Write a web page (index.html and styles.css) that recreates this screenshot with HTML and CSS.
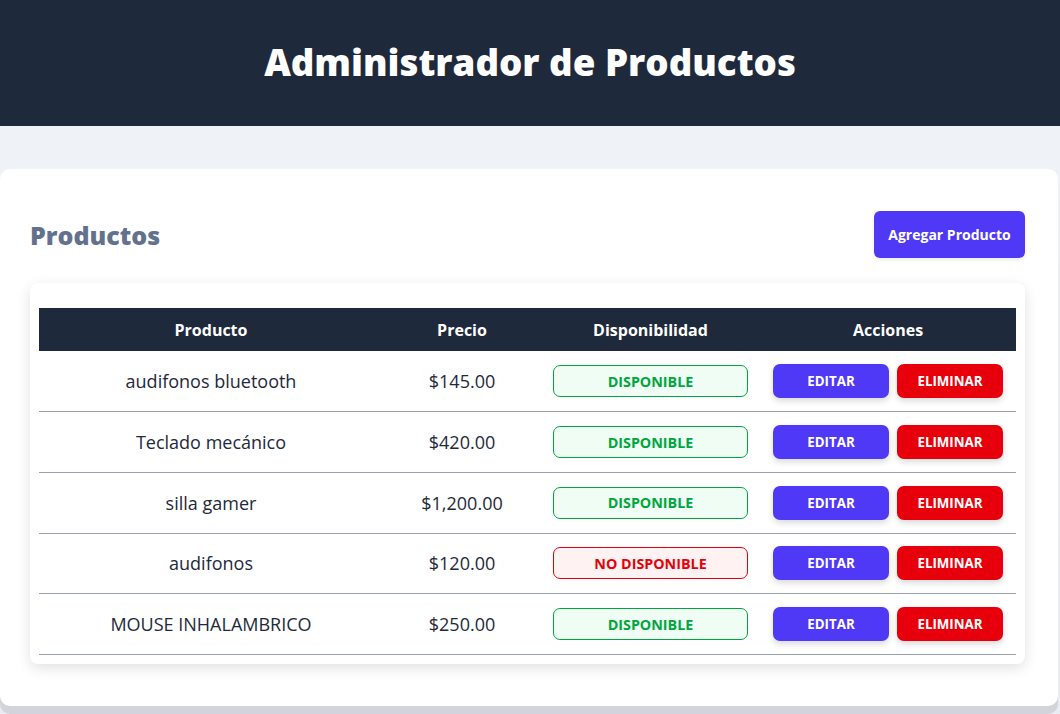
FILE: index.html
```html
<!DOCTYPE html>
<html lang="es">
<head>
<meta charset="utf-8">
<title>Administrador de Productos</title>
<link rel="stylesheet" href="styles.css">
</head>
<body>
<header class="top">
  <h1 class="top-title">Administrador de Productos</h1>
</header>
<main class="page">
  <section class="panel">
    <div class="panel-head">
      <h2 class="panel-title">Productos</h2>
      <button class="btn-add">Agregar Producto</button>
    </div>
    <div class="table-card">
      <table class="tbl">
        <thead>
          <tr>
            <th class="c1">Producto</th>
            <th class="c2">Precio</th>
            <th class="c3">Disponibilidad</th>
            <th class="c4">Acciones</th>
          </tr>
        </thead>
        <tbody>
          <tr>
            <td>audifonos bluetooth</td>
            <td>$145.00</td>
            <td><span class="badge ok">DISPONIBLE</span></td>
            <td><div class="acts"><button class="btn edit">EDITAR</button><button class="btn del">ELIMINAR</button></div></td>
          </tr>
          <tr>
            <td>Teclado mecánico</td>
            <td>$420.00</td>
            <td><span class="badge ok">DISPONIBLE</span></td>
            <td><div class="acts"><button class="btn edit">EDITAR</button><button class="btn del">ELIMINAR</button></div></td>
          </tr>
          <tr>
            <td>silla gamer</td>
            <td>$1,200.00</td>
            <td><span class="badge ok">DISPONIBLE</span></td>
            <td><div class="acts"><button class="btn edit">EDITAR</button><button class="btn del">ELIMINAR</button></div></td>
          </tr>
          <tr>
            <td>audifonos</td>
            <td>$120.00</td>
            <td><span class="badge no">NO DISPONIBLE</span></td>
            <td><div class="acts"><button class="btn edit">EDITAR</button><button class="btn del">ELIMINAR</button></div></td>
          </tr>
          <tr>
            <td>MOUSE INHALAMBRICO</td>
            <td>$250.00</td>
            <td><span class="badge ok">DISPONIBLE</span></td>
            <td><div class="acts"><button class="btn edit">EDITAR</button><button class="btn del">ELIMINAR</button></div></td>
          </tr>
        </tbody>
      </table>
    </div>
  </section>
</main>
</body>
</html>
```

FILE: styles.css
```css
* { box-sizing: border-box; }
html, body { margin: 0; padding: 0; }
body {
  font-family: "Open Sans", "Noto Sans", "Liberation Sans", sans-serif;
  background: linear-gradient(180deg, #f1f5f9, #e9edf3);
  color: #1e293b;
  overflow: hidden;
  height: 714px;
}
.top {
  background: #1e293b;
  height: 126px;
  display: flex;
  align-items: center;
  justify-content: center;
}
.top-title {
  margin: 0;
  color: #fff;
  font-size: 36.7px;
  font-weight: 800;
  letter-spacing: 0;
  transform: translateY(-1px);
}
.page {
  padding-top: 43px;
}
.panel {
  background: #fff;
  width: 1058px;
  height: 537px;
  border-radius: 10px;
  box-shadow: 0 8px 0 #d1d5db;
  padding: 42px 33px 0 30px;
}
.panel-head {
  display: flex;
  align-items: center;
  justify-content: space-between;
  height: 47px;
}
.panel-title {
  margin: 0;
  font-size: 25px;
  font-weight: 800;
  color: #62718d;
}
.btn-add {
  background: #4f39f6;
  color: #fff;
  border: 0;
  border-radius: 6px;
  width: 151px;
  height: 47px;
  font-family: inherit;
  font-weight: 700;
  font-size: 14px;
  box-shadow: 0 2px 4px rgba(0,0,0,0.08);
}
.table-card {
  margin-top: 25px;
  width: 995px;
  background: #fff;
  border-radius: 8px;
  box-shadow: 0 4px 14px rgba(0,0,0,0.12);
  padding: 25px 9px 9px 9px;
}
.tbl {
  width: 977px;
  border-collapse: collapse;
  table-layout: fixed;
}
.tbl th {
  background: #1e293b;
  color: #fff;
  font-size: 16px;
  font-weight: 700;
  height: 43px;
  padding: 0;
  text-align: center;
}
.c1 { width: 344px; }
.c2 { width: 158px; }
.c3 { width: 219px; }
.c4 { width: 256px; }
.tbl td {
  height: 60.7px;
  padding: 0 12px;
  text-align: center;
  font-size: 18px;
  border-bottom: 1px solid #99a1af;
  color: #1e293b;
}
.badge {
  display: flex;
  align-items: center;
  justify-content: center;
  height: 32px;
  border-radius: 7px;
  border: 1px solid;
  font-size: 14.3px;
  font-weight: 700;
}
.badge.ok { color: #00a63e; border-color: #00a63e; background: #f0fdf4; }
.badge.no { color: #e7000b; border-color: #e7000b; background: #fef2f2; }
.acts {
  display: flex;
  gap: 8px;
  padding-left: 1px;
}
.btn {
  border: 0;
  border-radius: 7px;
  height: 34px;
  color: #fff;
  font-family: inherit;
  font-weight: 700;
  font-size: 13.3px;
  box-shadow: 0 3px 6px rgba(0,0,0,0.15);
}
.btn.edit { background: #4f39f6; width: 116px; }
.btn.del { background: #e7000b; width: 106px; }
```
